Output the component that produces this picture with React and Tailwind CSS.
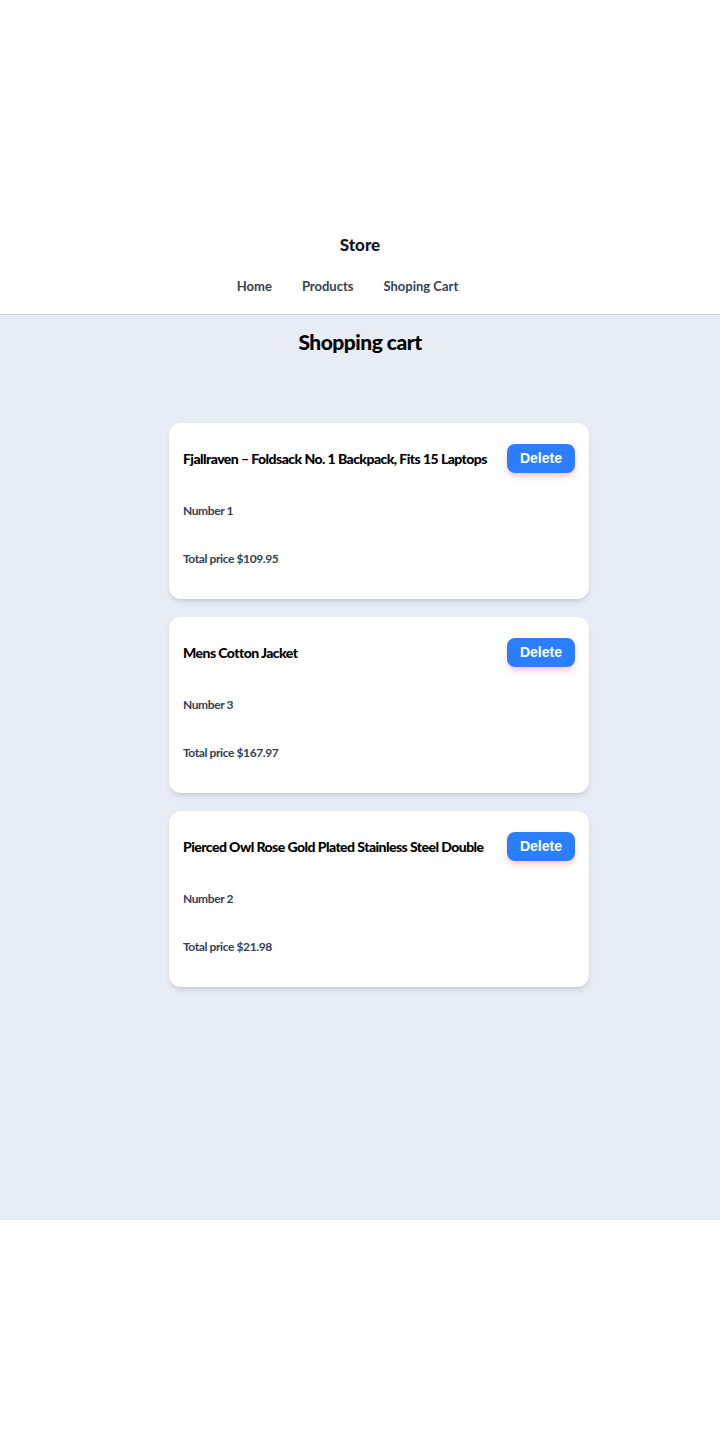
import React from "react";

const items = [
  { id: 1, title: "Fjallraven – Foldsack No. 1 Backpack, Fits 15 Laptops", number: 1, total: "109.95" },
  { id: 2, title: "Mens Cotton Jacket", number: 3, total: "167.97" },
  { id: 3, title: "Pierced Owl Rose Gold Plated Stainless Steel Double", number: 2, total: "21.98" },
];

const CartItem = ({ item }) => (
  <div className="bg-white rounded-xl shadow-md px-[14px] pt-[22px] pb-[32px]">
    <div className="flex items-center justify-between h-[28px]">
      <h3 className="text-[14px] font-black text-black tracking-[-0.55px]">{item.title}</h3>
      <button
        className="bg-blue-500 text-white rounded-lg px-[13px] py-1 text-[14px] font-bold shadow-md shadow-red-200"
        style={{ fontFamily: "'Liberation Sans', Arial, sans-serif" }}
      >
        Delete
      </button>
    </div>
    <p className="mt-[30px] text-[12px] leading-4 font-bold text-gray-700 tracking-[-0.4px]">Number {item.number}</p>
    <p className="mt-[32px] text-[12px] leading-4 font-bold text-gray-700 tracking-[-0.4px]">Total price ${item.total}</p>
  </div>
);

const App = () => {
  return (
    <div className="min-h-screen flex flex-col justify-center bg-white" style={{ fontFamily: "Lato, 'Noto Sans', sans-serif" }}>
      {/* Header */}
      <header className="bg-white border-b border-gray-300 pt-3 pb-[18px] flex flex-col items-center">
        <h1 className="text-[17px] leading-6 font-black text-gray-900">Store</h1>
        <nav className="mt-[19px] mr-[25px] flex gap-[30px] text-[13px] leading-5 font-bold text-gray-700">
          <a href="#">Home</a>
          <a href="#">Products</a>
          <a href="#">Shoping Cart</a>
        </nav>
      </header>

      {/* Cart */}
      <main className="bg-[#e8ecf5] h-[905px] flex flex-col items-center">
        <h2 className="mt-[13px] text-[21px] leading-7 font-black text-black tracking-[-0.5px]">Shopping cart</h2>
        <div className="mt-[67px] w-[420px] ml-[38px] flex flex-col gap-[18px]">
          {items.map((item) => (
            <CartItem key={item.id} item={item} />
          ))}
        </div>
      </main>
    </div>
  );
};

export default App;
